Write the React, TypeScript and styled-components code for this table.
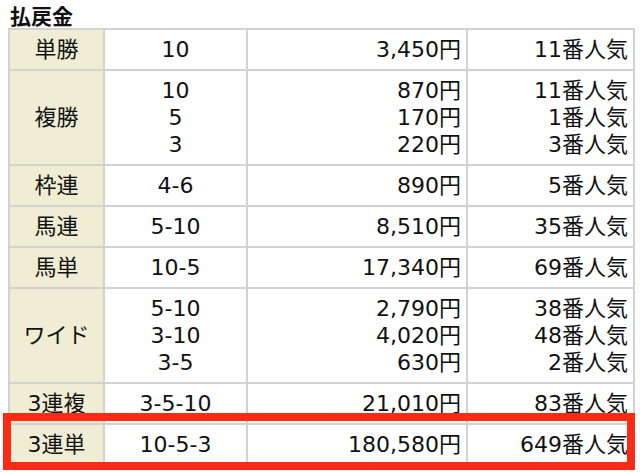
import React from "react";
import styled, { createGlobalStyle } from "styled-components";

const GlobalStyle = createGlobalStyle`
  html, body { margin: 0; padding: 0; background: #fff; }
  body { font-family: "DejaVu Sans", "Noto Sans CJK JP", sans-serif; color: #111; }
`;

const Page = styled.div`
  position: relative;
  width: 640px;
  height: 472px;
  padding: 3px 0 0 8px;
  box-sizing: border-box;
`;

const Title = styled.h2`
  margin: 0 0 0 2px;
  font-family: "Noto Sans CJK JP", sans-serif;
  font-size: 21px;
  line-height: 25px;
  font-weight: 700;
`;

const Table = styled.table`
  border-collapse: collapse;
  table-layout: fixed;
  width: 625px;
  font-size: 22px;
`;

const Cell = styled.td<{ $align: "center" | "right"; $head?: boolean }>`
  border: 2px solid #d2d2d2;
  background: ${(p) => (p.$head ? "#efedd3" : "#fff")};
  text-align: ${(p) => p.$align};
  padding: 6px 5px 6px 5px;
  line-height: 27px;
  vertical-align: middle;
  white-space: nowrap;
`;

const Line = styled.div``;

const Highlight = styled.div`
  position: absolute;
  left: 3px;
  top: 413px;
  width: 632px;
  height: 57px;
  box-sizing: border-box;
  border: 8px solid #ff2a14;
  pointer-events: none;
`;

type Row = { kind: string; combos: string[]; pay: string[]; pop: string[] };

const rows: Row[] = [
  { kind: "単勝", combos: ["10"], pay: ["3,450円"], pop: ["11番人気"] },
  { kind: "複勝", combos: ["10", "5", "3"], pay: ["870円", "170円", "220円"], pop: ["11番人気", "1番人気", "3番人気"] },
  { kind: "枠連", combos: ["4-6"], pay: ["890円"], pop: ["5番人気"] },
  { kind: "馬連", combos: ["5-10"], pay: ["8,510円"], pop: ["35番人気"] },
  { kind: "馬単", combos: ["10-5"], pay: ["17,340円"], pop: ["69番人気"] },
  { kind: "ワイド", combos: ["5-10", "3-10", "3-5"], pay: ["2,790円", "4,020円", "630円"], pop: ["38番人気", "48番人気", "2番人気"] },
  { kind: "3連複", combos: ["3-5-10"], pay: ["21,010円"], pop: ["83番人気"] },
  { kind: "3連単", combos: ["10-5-3"], pay: ["180,580円"], pop: ["649番人気"] },
];

const Lines = ({ items }: { items: string[] }) => (
  <>
    {items.map((t, i) => (
      <Line key={i}>{t}</Line>
    ))}
  </>
);

export default function App() {
  return (
    <Page>
      <GlobalStyle />
      <Title>払戻金</Title>
      <Table>
        <colgroup>
          <col style={{ width: 95 }} />
          <col style={{ width: 143 }} />
          <col style={{ width: 220 }} />
          <col style={{ width: 167 }} />
        </colgroup>
        <tbody>
          {rows.map((r) => (
            <tr key={r.kind}>
              <Cell $align="center" $head>
                {r.kind}
              </Cell>
              <Cell $align="center">
                <Lines items={r.combos} />
              </Cell>
              <Cell $align="right">
                <Lines items={r.pay} />
              </Cell>
              <Cell $align="right">
                <Lines items={r.pop} />
              </Cell>
            </tr>
          ))}
        </tbody>
      </Table>
      <Highlight />
    </Page>
  );
}
